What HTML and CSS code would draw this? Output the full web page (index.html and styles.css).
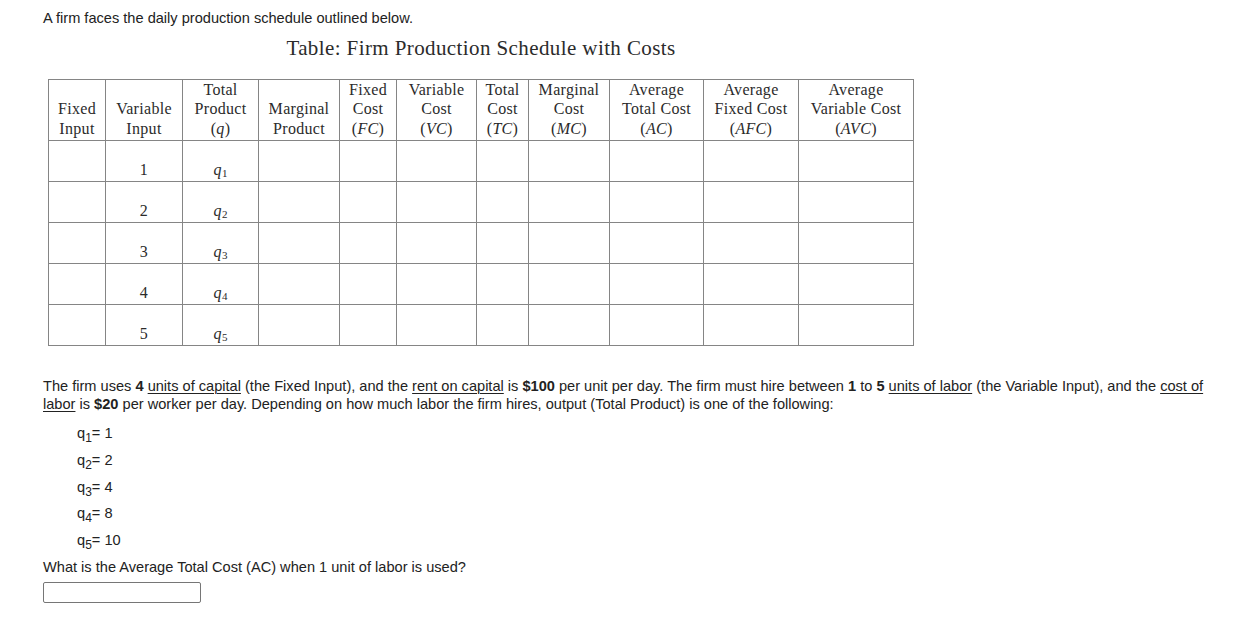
FILE: index.html
```html
<!DOCTYPE html>
<html lang="en">
<head>
<meta charset="utf-8">
<title>Firm Production Schedule</title>
<link rel="stylesheet" href="styles.css">
</head>
<body>
<div class="page">
  <p class="intro">A firm faces the daily production schedule outlined below.</p>

  <div class="figure">
    <div class="caption">Table: Firm Production Schedule with Costs</div>
    <table class="sched">
      <colgroup>
        <col class="w57"><col class="w77"><col class="w76"><col class="w81"><col class="w57"><col class="w80"><col class="w52"><col class="w81"><col class="w94"><col class="w95"><col class="w115">
      </colgroup>
      <thead>
        <tr>
          <th>Fixed<br>Input</th>
          <th>Variable<br>Input</th>
          <th>Total<br>Product<br>(<i>q</i>)</th>
          <th>Marginal<br>Product</th>
          <th>Fixed<br>Cost<br>(<i>FC</i>)</th>
          <th>Variable<br>Cost<br>(<i>VC</i>)</th>
          <th>Total<br>Cost<br>(<i>TC</i>)</th>
          <th>Marginal<br>Cost<br>(<i>MC</i>)</th>
          <th>Average<br>Total Cost<br>(<i>AC</i>)</th>
          <th>Average<br>Fixed Cost<br>(<i>AFC</i>)</th>
          <th>Average<br>Variable Cost<br>(<i>AVC</i>)</th>
        </tr>
      </thead>
      <tbody>
        <tr><td></td><td>1</td><td><i>q</i><sub>1</sub></td><td></td><td></td><td></td><td></td><td></td><td></td><td></td><td></td></tr>
        <tr><td></td><td>2</td><td><i>q</i><sub>2</sub></td><td></td><td></td><td></td><td></td><td></td><td></td><td></td><td></td></tr>
        <tr><td></td><td>3</td><td><i>q</i><sub>3</sub></td><td></td><td></td><td></td><td></td><td></td><td></td><td></td><td></td></tr>
        <tr><td></td><td>4</td><td><i>q</i><sub>4</sub></td><td></td><td></td><td></td><td></td><td></td><td></td><td></td><td></td></tr>
        <tr><td></td><td>5</td><td><i>q</i><sub>5</sub></td><td></td><td></td><td></td><td></td><td></td><td></td><td></td><td></td></tr>
      </tbody>
    </table>
  </div>

  <p class="desc">The firm uses <b>4</b> <u>units of capital</u> (the Fixed Input), and the <u>rent on capital</u> is <b>$100</b> per unit per day. The firm must hire between <b>1</b> to <b>5</b> <u>units of labor</u> (the Variable Input), and the <u>cost of</u><br><u>labor</u> is <b>$20</b> per worker per day. Depending on how much labor the firm hires, output (Total Product) is one of the following:</p>

  <div class="qlist">
    <div class="qitem">q<sub>1</sub>= 1</div>
    <div class="qitem">q<sub>2</sub>= 2</div>
    <div class="qitem">q<sub>3</sub>= 4</div>
    <div class="qitem">q<sub>4</sub>= 8</div>
    <div class="qitem">q<sub>5</sub>= 10</div>
    <div class="question">What is the Average Total Cost (AC) when 1 unit of labor is used?</div>
  </div>

  <input class="answer" type="text" aria-label="Answer">
</div>
</body>
</html>
```

FILE: styles.css
```css
html, body {
  margin: 0;
  padding: 0;
  background: #ffffff;
}

.page {
  padding: 10px 0 0 43px;
  font-family: "Liberation Sans", Arial, sans-serif;
  font-size: 14.6px;
  line-height: 17.5px;
  color: #222222;
}

.intro {
  margin: 0;
}

.figure {
  display: flex;
  flex-direction: column;
  align-items: center;
  width: fit-content;
  margin: 8px 0 0 5px;
}

.caption {
  font-family: "Liberation Serif", "Times New Roman", serif;
  font-size: 21px;
  line-height: 24px;
  letter-spacing: 0.4px;
  color: #2b2b2b;
  margin-bottom: 19px;
}

.sched {
  border-collapse: collapse;
  table-layout: fixed;
  width: 866px;
  font-family: "Liberation Serif", "Times New Roman", serif;
  font-size: 16px;
  letter-spacing: 0.3px;
  color: #2b2b2b;
}

.w57 { width: 57px; }
.w77 { width: 77px; }
.w76 { width: 76px; }
.w81 { width: 81px; }
.w80 { width: 80px; }
.w52 { width: 52px; }
.w94 { width: 94px; }
.w95 { width: 95px; }
.w115 { width: 115px; }

.sched th,
.sched td {
  border: 1px solid #858585;
  padding: 0;
  text-align: center;
}

.sched th {
  height: 58px;
  padding-bottom: 2px;
  vertical-align: bottom;
  font-weight: normal;
  line-height: 19.5px;
  white-space: nowrap;
}

.sched td {
  height: 39px;
  padding-bottom: 1px;
  vertical-align: bottom;
  line-height: 20px;
}

.sched sub {
  font-size: 11px;
  line-height: 0;
  vertical-align: -2px;
  letter-spacing: 0;
}

.desc {
  margin: 32px 0 0 0;
  width: 1178px;
}

.desc u {
  text-decoration-thickness: 1px;
  text-underline-offset: 2px;
}

.qlist {
  display: flex;
  flex-direction: column;
  gap: 9.25px;
  margin-top: 12px;
}

.qitem {
  padding-left: 34px;
}

.qitem sub {
  font-size: 12px;
  line-height: 0;
  vertical-align: -4px;
}

.question {
  margin: 0;
}

.answer {
  display: block;
  margin: 6px 0 0 0;
  width: 158px;
  height: 21px;
  box-sizing: border-box;
  border: 1px solid #767676;
  border-radius: 2px;
  padding: 1px 2px;
  font: inherit;
  background: #ffffff;
}
```
